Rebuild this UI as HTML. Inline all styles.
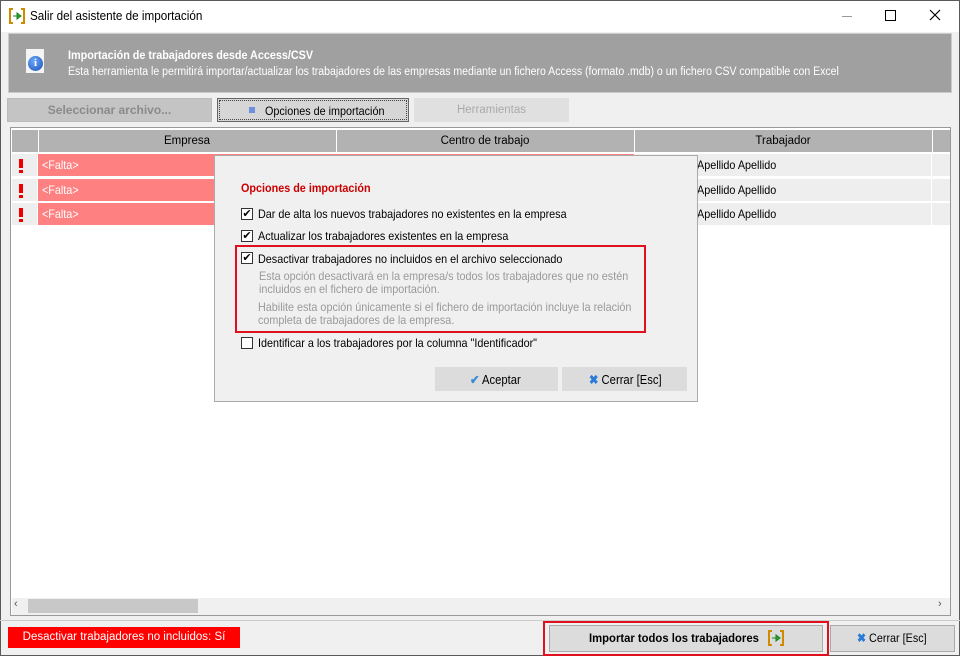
<!DOCTYPE html>
<html><head><meta charset="utf-8"><style>
*{margin:0;padding:0;box-sizing:border-box}
body{width:960px;height:656px;overflow:hidden;background:#f0f0f0;font-family:"Liberation Sans",sans-serif;font-size:12px;color:#000;position:relative}
.a{position:absolute}
.n{transform:scaleX(.9);transform-origin:left center;white-space:nowrap}
.c{text-align:center}
</style></head><body>
<div class="a" style="left:0;top:0;width:960px;height:656px;border:1px solid #5a5a5a"></div>
<div class="a" style="left:1px;top:1px;width:958px;height:31px;background:#fff"></div>
<svg class="a" style="left:9px;top:8px" width="16" height="16" viewBox="0 0 16 16"><path d="M4 1H1v14h3M12 1h3v14h-3" fill="none" stroke="#d08a00" stroke-width="2"/><path d="M4 8h4V5l4 3-4 3V8" fill="#2aa52a" stroke="#1a801a"/></svg>
<div class="a n" style="left:30px;top:8px;font-size:13px">Salir del asistente de importación</div>
<div class="a" style="left:842px;top:16px;width:10px;height:1px;background:#999"></div>
<div class="a" style="left:885px;top:10px;width:11px;height:11px;border:1px solid #000"></div>
<svg class="a" style="left:929px;top:9px" width="12" height="12" viewBox="0 0 12 12"><path d="M1 1L11 11M11 1L1 11" stroke="#000" stroke-width="1.2"/></svg>
<div class="a" style="left:8px;top:33px;width:944px;height:60px;background:#a0a0a0;border:1px solid #ccc"></div>
<div class="a" style="left:26px;top:49px;width:18px;height:24px;background:#f4f4f4"></div>
<div class="a" style="left:28px;top:56px;width:15px;height:15px;border-radius:50%;background:radial-gradient(circle at 40% 35%,#6aa8ff,#1a50b0);color:#fff;font-size:11px;font-weight:bold;text-align:center;line-height:15px;font-family:'Liberation Serif',serif">i</div>
<div class="a n" style="left:68px;top:48px;color:#fff;font-weight:bold;font-size:12px">Importación de trabajadores desde Access/CSV</div>
<div class="a n" style="left:68px;top:66px;color:#fff;font-size:11.5px;transform:scaleX(.915)">Esta herramienta le permitirá importar/actualizar los trabajadores de las empresas mediante un fichero Access (formato .mdb) o un fichero CSV compatible con Excel</div>
<div class="a c" style="left:7px;top:98px;width:205px;height:24px;background:#c4c4c4;border:1px solid #bbb;color:#8a8a8a;font-weight:bold;line-height:22px;font-size:12px">Seleccionar archivo...</div>
<div class="a" style="left:217px;top:98px;width:192px;height:24px;background:#d6d6d6;border:1px solid #666"></div>
<div class="a" style="left:219px;top:100px;width:188px;height:20px;border:1px dotted #444"></div>
<div class="a" style="left:249px;top:107px;width:6px;height:6px;background:#6e8ee0"></div>
<div class="a n" style="left:265px;top:104px;font-size:12px">Opciones de importación</div>
<div class="a c" style="left:414px;top:98px;width:155px;height:24px;background:#e0e0e0;color:#aaa;line-height:24px;font-size:11.5px">Herramientas</div>
<div class="a" style="left:10px;top:127px;width:941px;height:489px;background:#fff;border:1px solid #999"></div>
<div class="a" style="left:12px;top:130px;width:938px;height:22px;background:#b2b2b2"></div>
<div class="a" style="left:38px;top:130px;width:1px;height:22px;background:#fff"></div>
<div class="a" style="left:336px;top:130px;width:1px;height:22px;background:#fff"></div>
<div class="a" style="left:634px;top:130px;width:1px;height:22px;background:#fff"></div>
<div class="a" style="left:932px;top:130px;width:1px;height:22px;background:#fff"></div>
<div class="a c" style="left:38px;top:135px;width:298px;font-size:11.5px">Empresa</div>
<div class="a c" style="left:336px;top:135px;width:298px;font-size:11.5px">Centro de trabajo</div>
<div class="a c" style="left:634px;top:135px;width:298px;font-size:11.5px">Trabajador</div>
<div class="a" style="left:12px;top:154px;width:938px;height:72px;background:#fff"></div>
<div style="position:absolute;left:12px;top:154px">
<div class="a" style="left:0;top:0;width:25px;height:22px;background:#eee"></div><div class="a" style="left:26px;top:0;width:596px;height:22px;background:#ff8080"></div><div class="a" style="left:623px;top:0;width:296px;height:22px;background:#eee"></div><div class="a" style="left:920px;top:0;width:18px;height:22px;background:#eee"></div>
<div class="a" style="left:0;top:25px;width:25px;height:22px;background:#eee"></div><div class="a" style="left:26px;top:25px;width:596px;height:22px;background:#ff8080"></div><div class="a" style="left:623px;top:25px;width:296px;height:22px;background:#eee"></div><div class="a" style="left:920px;top:25px;width:18px;height:22px;background:#eee"></div>
<div class="a" style="left:0;top:49px;width:25px;height:22px;background:#eee"></div><div class="a" style="left:26px;top:49px;width:596px;height:22px;background:#ff8080"></div><div class="a" style="left:623px;top:49px;width:296px;height:22px;background:#eee"></div><div class="a" style="left:920px;top:49px;width:18px;height:22px;background:#eee"></div>
</div>
<div class="a" style="left:19px;top:159px;width:4px;height:9px;background:#e00"></div><div class="a" style="left:19px;top:170px;width:4px;height:3px;background:#e00"></div>
<div class="a" style="left:19px;top:184px;width:4px;height:9px;background:#e00"></div><div class="a" style="left:19px;top:195px;width:4px;height:3px;background:#e00"></div>
<div class="a" style="left:19px;top:208px;width:4px;height:9px;background:#e00"></div><div class="a" style="left:19px;top:219px;width:4px;height:3px;background:#e00"></div>
<div class="a n" style="left:42px;top:158px;color:#fff">&lt;Falta&gt;</div>
<div class="a n" style="left:42px;top:183px;color:#fff">&lt;Falta&gt;</div>
<div class="a n" style="left:42px;top:207px;color:#fff">&lt;Falta&gt;</div>
<div class="a n" style="left:697px;top:158px">Apellido Apellido</div>
<div class="a n" style="left:697px;top:183px">Apellido Apellido</div>
<div class="a n" style="left:697px;top:207px">Apellido Apellido</div>
<div class="a" style="left:12px;top:598px;width:938px;height:17px;background:#f0f0f0"></div>
<div class="a" style="left:28px;top:599px;width:170px;height:14px;background:#c8c8c8"></div>
<div class="a" style="left:14px;top:598px;color:#555;font-size:11px">‹</div>
<div class="a" style="left:938px;top:598px;color:#555;font-size:11px">›</div>
<div class="a" style="left:214px;top:155px;width:484px;height:247px;background:#f0f0f0;border:1px solid #aaa"></div>
<div class="a n" style="left:241px;top:181px;color:#c00;font-weight:bold;font-size:12px">Opciones de importación</div>
<div class="a" style="left:241px;top:208px;width:12px;height:12px;border:1px solid #333;background:#fff;font-size:11px;line-height:10px;text-align:center">✔</div>
<div class="a n" style="left:258px;top:207px">Dar de alta los nuevos trabajadores no existentes en la empresa</div>
<div class="a" style="left:241px;top:230px;width:12px;height:12px;border:1px solid #333;background:#fff;font-size:11px;line-height:10px;text-align:center">✔</div>
<div class="a n" style="left:258px;top:229px">Actualizar los trabajadores existentes en la empresa</div>
<div class="a" style="left:235px;top:245px;width:411px;height:88px;border:2px solid #e0101e"></div>
<div class="a" style="left:241px;top:252px;width:12px;height:12px;border:1px solid #333;background:#fff;font-size:11px;line-height:10px;text-align:center">✔</div>
<div class="a n" style="left:258px;top:252px">Desactivar trabajadores no incluidos en el archivo seleccionado</div>
<div class="a n" style="left:259px;top:270px;color:#999;line-height:13px">Esta opción desactivará en la empresa/s todos los trabajadores que no estén<br>incluidos en el fichero de importación.</div>
<div class="a n" style="left:258px;top:301px;color:#999;line-height:13px">Habilite esta opción únicamente si el fichero de importación incluye la relación<br>completa de trabajadores de la empresa.</div>
<div class="a" style="left:241px;top:337px;width:12px;height:12px;border:1px solid #333;background:#fff"></div>
<div class="a n" style="left:258px;top:336px">Identificar a los trabajadores por la columna "Identificador"</div>
<div class="a" style="left:435px;top:367px;width:123px;height:24px;background:#dcdcdc"></div>
<div class="a n" style="left:470px;top:372px;font-size:12.5px"><span style="color:#3a8ad8;font-weight:bold">✔</span> Aceptar</div>
<div class="a" style="left:562px;top:367px;width:125px;height:24px;background:#dcdcdc"></div>
<div class="a n" style="left:589px;top:372px;font-size:12.5px"><span style="color:#2a7ad8;font-weight:bold">✖</span> Cerrar [Esc]</div>
<div class="a" style="left:0;top:620px;width:960px;height:1px;background:#ccc"></div>
<div class="a c" style="left:8px;top:627px;width:232px;height:21px;background:#ff0000;color:#fff;line-height:21px;font-size:11.5px">Desactivar trabajadores no incluidos: Sí</div>
<div class="a" style="left:543px;top:621px;width:286px;height:35px;border:2px solid #e0101e"></div>
<div class="a" style="left:549px;top:625px;width:274px;height:27px;background:#dcdcdc;border:1px solid #aaa"></div>
<div class="a n" style="left:589px;top:631px;font-weight:bold;font-size:12px;transform:scaleX(.94)">Importar todos los trabajadores</div>
<svg class="a" style="left:768px;top:630px" width="16" height="16" viewBox="0 0 16 16"><path d="M4 1H1v14h3M12 1h3v14h-3" fill="none" stroke="#d08a00" stroke-width="2"/><path d="M4 8h4V5l4 3-4 3V8" fill="#2aa52a" stroke="#1a801a"/></svg>
<div class="a" style="left:830px;top:625px;width:125px;height:27px;background:#dcdcdc;border:1px solid #aaa"></div>
<div class="a n" style="left:857px;top:631px"><span style="color:#2a7ad8;font-weight:bold">✖</span> Cerrar [Esc]</div>
</body></html>
